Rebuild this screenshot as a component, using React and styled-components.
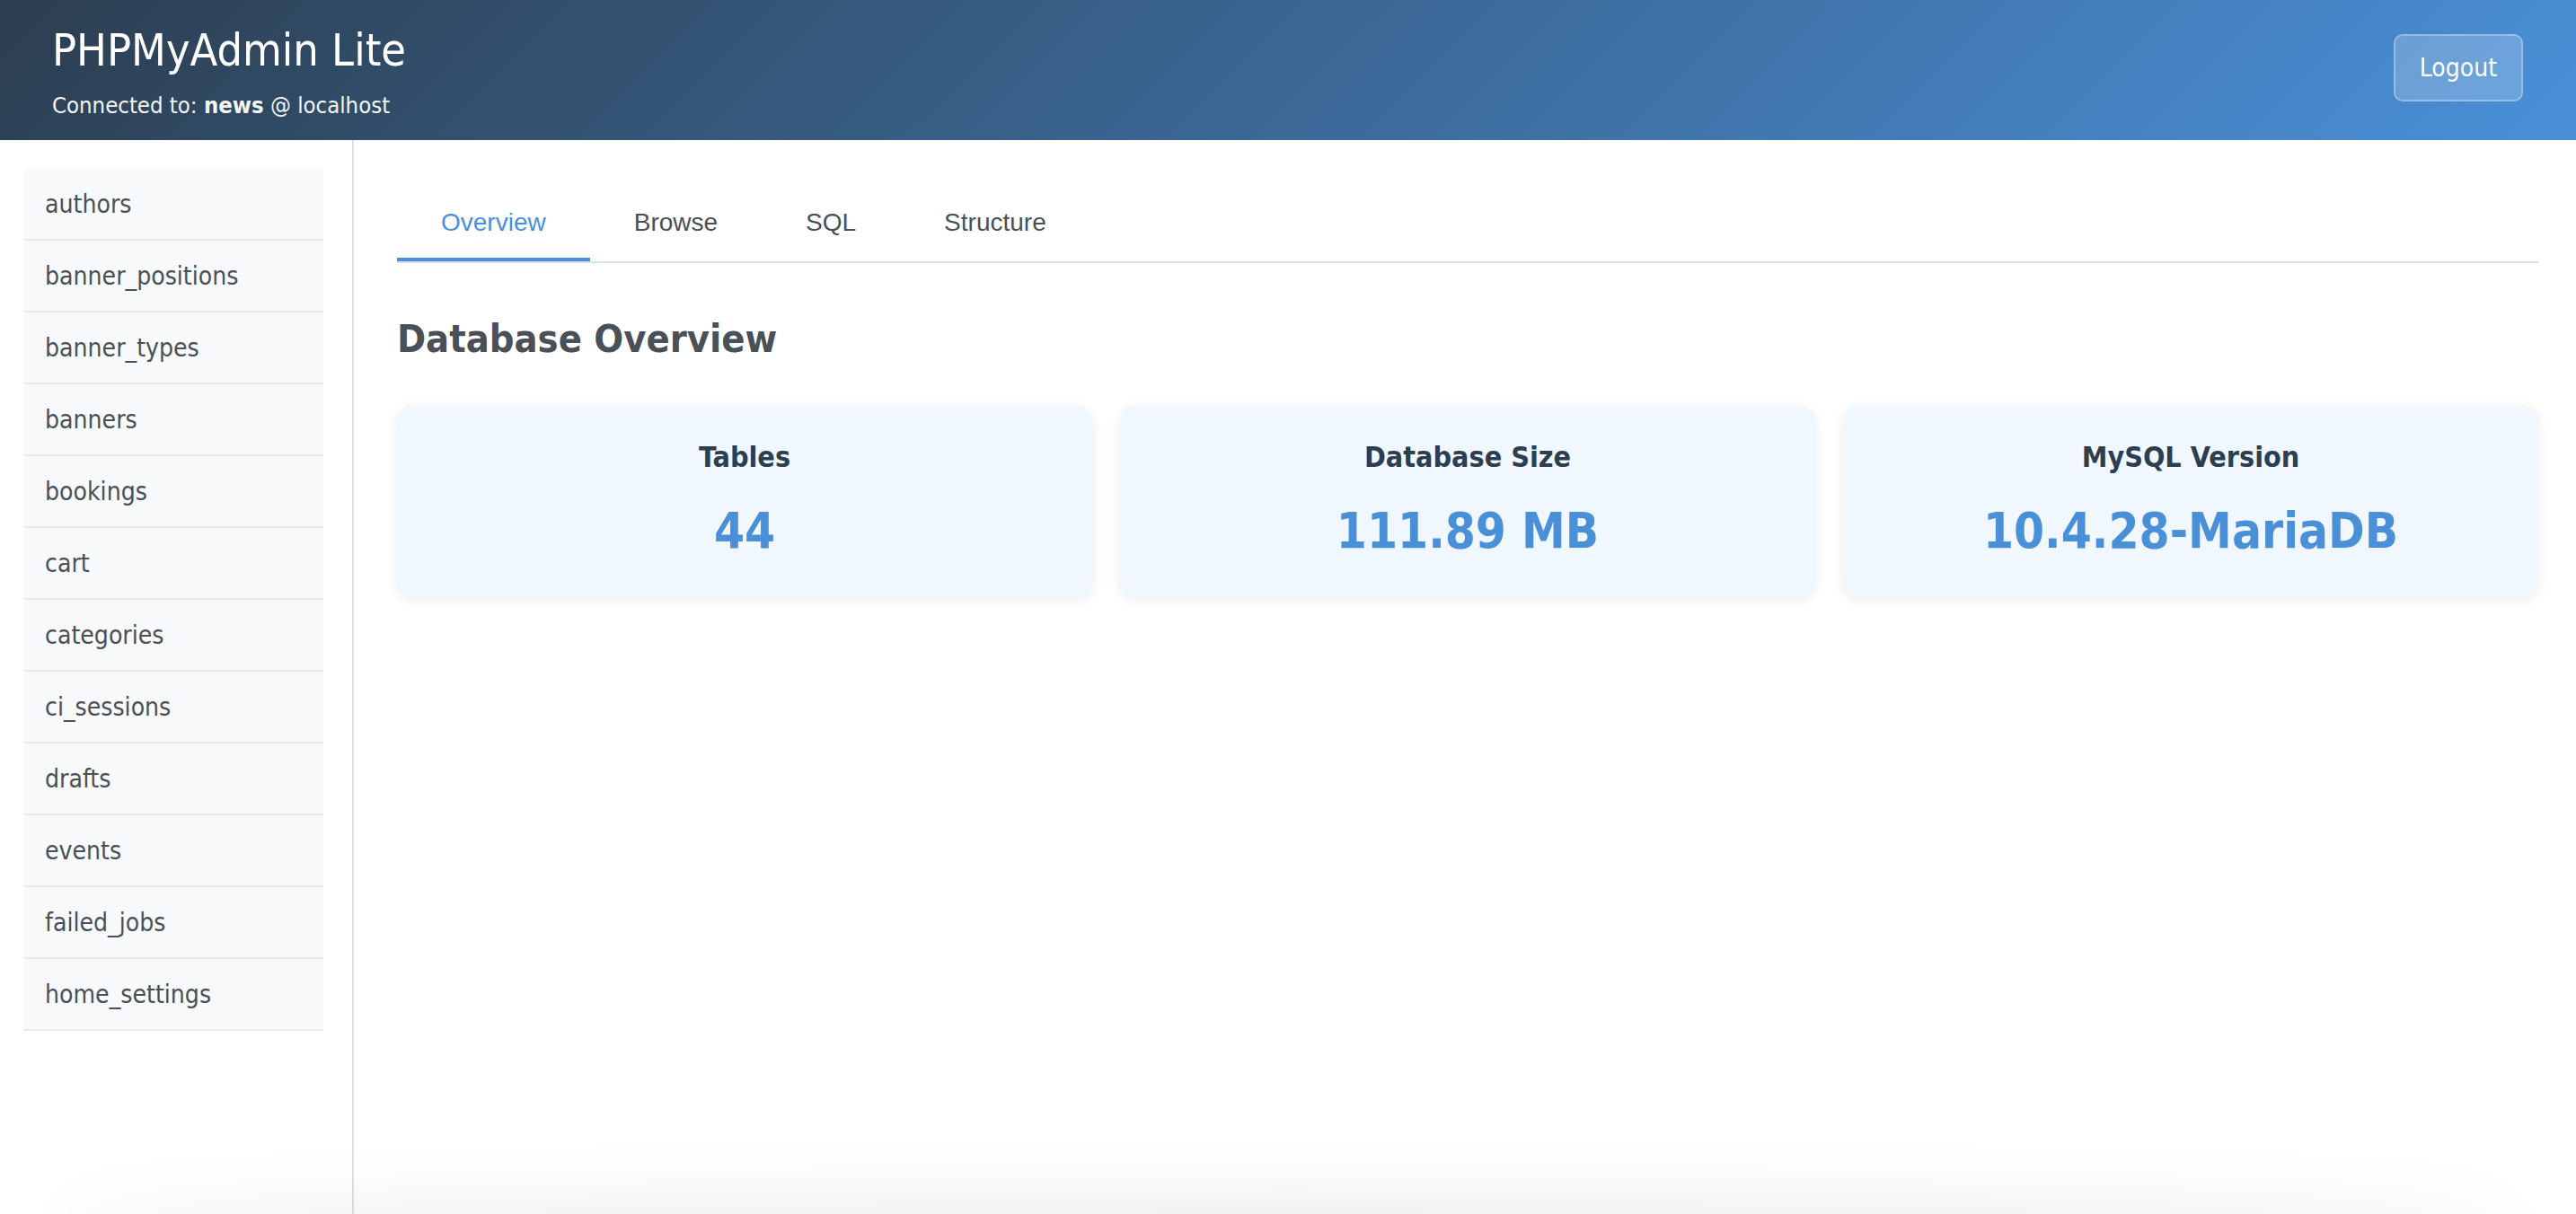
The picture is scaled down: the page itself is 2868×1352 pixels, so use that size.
import React from 'react';
import styled, { createGlobalStyle } from 'styled-components';

const GlobalStyle = createGlobalStyle`
  html, body {
    margin: 0;
    padding: 0;
    background: #ffffff;
  }
  body {
    font-family: "DejaVu Sans Condensed", "DejaVu Sans", sans-serif;
    font-stretch: condensed;
    overflow: hidden;
  }
  * {
    box-sizing: border-box;
  }
`;

const Page = styled.div`
  display: flex;
  flex-direction: column;
  height: 100vh;
`;

const Header = styled.header`
  display: flex;
  justify-content: space-between;
  align-items: center;
  height: 156px;
  padding: 0 59px 0 58px;
  background: linear-gradient(135deg, #2c3e50 0%, #4a90d9 100%);
  color: #ffffff;
  flex-shrink: 0;
`;

const Brand = styled.div`
  display: flex;
  flex-direction: column;
  padding-top: 4px;
`;

const Title = styled.h1`
  margin: 0 0 14px;
  font-size: 50px;
  font-weight: 400;
  line-height: 60px;
`;

const Connection = styled.div`
  font-size: 25.5px;
  line-height: 34px;
  opacity: 0.95;

  strong {
    font-weight: 700;
  }
`;

const LogoutButton = styled.button`
  height: 75px;
  padding: 0 27px;
  margin-top: -5px;
  font-family: inherit;
  font-stretch: condensed;
  font-size: 28px;
  color: #ffffff;
  background: rgba(255, 255, 255, 0.2);
  border: 2px solid rgba(255, 255, 255, 0.3);
  border-radius: 10px;
  cursor: pointer;
`;

const Body = styled.div`
  display: flex;
  flex: 1;
  min-height: 0;
`;

const Sidebar = styled.aside`
  width: 394px;
  flex-shrink: 0;
  padding: 32px 32px 0 26px;
  border-right: 2px solid #dee2e6;
  background: #ffffff;
`;

const TableList = styled.ul`
  list-style: none;
  margin: 0;
  padding: 0;
`;

const TableItem = styled.li`
  height: 80px;
  display: flex;
  align-items: center;
  padding: 0 24px;
  font-size: 28.1px;
  color: #495057;
  background: #f8f9fa;
  border-bottom: 2px solid #e9ecef;
  cursor: pointer;
`;

const Main = styled.main`
  flex: 1;
  padding: 52px 42px 0 48px;
`;

const Tabs = styled.nav`
  display: flex;
  border-bottom: 2px solid #dee2e6;
`;

const Tab = styled.button`
  padding: 24px 49px 23px;
  font-family: "Liberation Sans", Arial, sans-serif;
  font-size: 28px;
  line-height: 32px;
  color: ${(p) => (p.$active ? '#4a90d9' : '#495057')};
  background: none;
  border: none;
  border-bottom: 4px solid ${(p) => (p.$active ? '#4a90d9' : 'transparent')};
  cursor: pointer;
`;

const Heading = styled.h2`
  margin: 58px 0 0;
  height: 100px;
  font-size: 43px;
  line-height: 52px;
  font-weight: 700;
  color: #495057;
`;

const Stats = styled.div`
  display: grid;
  grid-template-columns: repeat(3, 1fr);
  gap: 31px;
`;

const StatCard = styled.div`
  padding: 36px 24px 39px;
  text-align: center;
  background: #f0f7ff;
  border-radius: 18px;
  box-shadow: 0 4px 14px rgba(0, 0, 0, 0.08);
`;

const StatLabel = styled.div`
  margin-bottom: 26px;
  font-size: 32px;
  line-height: 44px;
  font-weight: 700;
  color: #2c3e50;
`;

const StatValue = styled.div`
  font-size: 54.5px;
  line-height: 68px;
  font-weight: 700;
  color: #4a90d9;
`;

const BottomShade = styled.div`
  position: fixed;
  left: 60px;
  right: 60px;
  bottom: -60px;
  height: 60px;
  border-radius: 50%;
  box-shadow: 0 -10px 80px rgba(0, 0, 0, 0.1);
  pointer-events: none;
`;

const tables = [
  'authors',
  'banner_positions',
  'banner_types',
  'banners',
  'bookings',
  'cart',
  'categories',
  'ci_sessions',
  'drafts',
  'events',
  'failed_jobs',
  'home_settings',
];

const tabs = ['Overview', 'Browse', 'SQL', 'Structure'];

const stats = [
  { label: 'Tables', value: '44' },
  { label: 'Database Size', value: '111.89 MB' },
  { label: 'MySQL Version', value: '10.4.28-MariaDB' },
];

const App = () => {
  return (
    <>
      <GlobalStyle />
      <Page>
        <Header>
          <Brand>
            <Title>PHPMyAdmin Lite</Title>
            <Connection>
              Connected to: <strong>news</strong> @ localhost
            </Connection>
          </Brand>
          <LogoutButton>Logout</LogoutButton>
        </Header>
        <Body>
          <Sidebar>
            <TableList>
              {tables.map((t) => (
                <TableItem key={t}>{t}</TableItem>
              ))}
            </TableList>
          </Sidebar>
          <Main>
            <Tabs>
              {tabs.map((t, i) => (
                <Tab key={t} $active={i === 0}>{t}</Tab>
              ))}
            </Tabs>
            <Heading>Database Overview</Heading>
            <Stats>
              {stats.map((s) => (
                <StatCard key={s.label}>
                  <StatLabel>{s.label}</StatLabel>
                  <StatValue>{s.value}</StatValue>
                </StatCard>
              ))}
            </Stats>
          </Main>
        </Body>
      </Page>
      <BottomShade />
    </>
  );
};

export default App;
